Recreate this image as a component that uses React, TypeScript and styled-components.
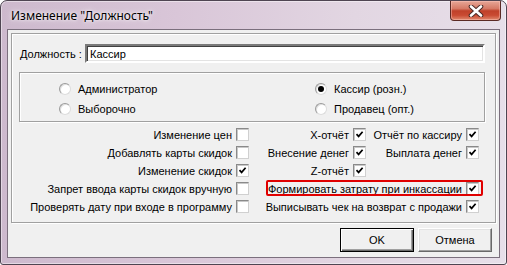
import React from 'react';
import styled, { createGlobalStyle } from 'styled-components';

const GlobalStyle = createGlobalStyle`
  html, body {
    margin: 0;
    padding: 0;
    background: #ffffff;
  }
  body {
    font-family: "Liberation Sans", Arial, sans-serif;
    font-size: 11px;
    color: #000000;
  }
`;

interface CheckItem {
  label: string;
  checked: boolean;
  span?: boolean;
  marked?: boolean;
}

const checkRows: CheckItem[][] = [
  [
    { label: 'Изменение цен', checked: false },
    { label: 'X-отчёт', checked: true },
    { label: 'Отчёт по кассиру', checked: true },
  ],
  [
    { label: 'Добавлять карты скидок', checked: false },
    { label: 'Внесение денег', checked: true },
    { label: 'Выплата денег', checked: true },
  ],
  [
    { label: 'Изменение скидок', checked: true },
    { label: 'Z-отчёт', checked: true },
  ],
  [
    { label: 'Запрет ввода карты скидок вручную', checked: false },
    { label: 'Формировать затрату при инкассации', checked: true, span: true, marked: true },
  ],
  [
    { label: 'Проверять дату при входе в программу', checked: false },
    { label: 'Выписывать чек на возврат с продажи', checked: true, span: true },
  ],
];

const CheckMark = () => (
  <svg width='9' height='9' viewBox='0 0 9 9'>
    <path d='M1.5 4.2 L3.6 6.4 L7.6 1.8' fill='none' stroke='#000' strokeWidth='1.7' />
  </svg>
);

const CloseIcon = () => (
  <svg width='20' height='12' viewBox='0 0 20 12'>
    <path d='M5 1.5 L15 10.5 M15 1.5 L5 10.5' stroke='#4a2a26' strokeWidth='4.6' strokeLinecap='round' />
    <path d='M5 1.5 L15 10.5 M15 1.5 L5 10.5' stroke='#ffffff' strokeWidth='2.6' strokeLinecap='round' />
  </svg>
);

const App = () => {
  return (
    <>
      <GlobalStyle />
      <St.Window>
        <St.TitleBar>
          <St.Title>Изменение "Должность"</St.Title>
          <St.CloseButton>
            <CloseIcon />
          </St.CloseButton>
        </St.TitleBar>
        <St.Client>
          <St.MainPanel>
            <St.NameRow>
              <St.NameLabel>Должность :</St.NameLabel>
              <St.Input>Кассир</St.Input>
            </St.NameRow>

            <St.RadioGroup>
              <St.RadioItem>
                <St.Radio />
                Администратор
              </St.RadioItem>
              <St.RadioItem>
                <St.Radio $checked />
                Кассир (розн.)
              </St.RadioItem>
              <St.RadioItem>
                <St.Radio />
                Выборочно
              </St.RadioItem>
              <St.RadioItem>
                <St.Radio />
                Продавец (опт.)
              </St.RadioItem>
            </St.RadioGroup>

            <St.CheckGrid>
              {checkRows.map((row, r) =>
                row.map((item, c) => (
                  <St.CheckCell key={item.label} $row={r + 1} $col={c + 1} $span={item.span}>
                    <St.CheckLabel $marked={item.marked}>{item.label}</St.CheckLabel>
                    <St.CheckBox>{item.checked && <CheckMark />}</St.CheckBox>
                  </St.CheckCell>
                )),
              )}
            </St.CheckGrid>
          </St.MainPanel>

          <St.ButtonRow>
            <St.Button $default>OK</St.Button>
            <St.Button>Отмена</St.Button>
          </St.ButtonRow>
        </St.Client>
      </St.Window>
    </>
  );
};

const St = {
  Window: styled.div`
    box-sizing: border-box;
    width: 507px;
    height: 265px;
    display: flex;
    flex-direction: column;
    border: 1px solid #4f4552;
    border-radius: 7px 7px 3px 3px;
    overflow: hidden;
    background: linear-gradient(to right, #cdb9cd 0%, #d9c6d8 35%, #e2d6e2 70%, #e7dfe9 100%);
    box-shadow: inset 0 0 0 1px rgba(255, 255, 255, 0.45);
  `,

  TitleBar: styled.div`
    height: 28px;
    flex-shrink: 0;
    display: flex;
    align-items: flex-start;
    justify-content: space-between;
    padding-left: 10px;
  `,

  Title: styled.div`
    font-family: "Noto Sans", "Open Sans", sans-serif;
    font-size: 12px;
    line-height: 29px;
    color: #000;
    text-shadow: 0 0 6px rgba(255, 255, 255, 0.9), 0 0 3px rgba(255, 255, 255, 0.9);
  `,

  CloseButton: styled.div`
    box-sizing: border-box;
    width: 51px;
    height: 20px;
    margin-right: 5px;
    display: flex;
    align-items: center;
    justify-content: center;
    border: 1px solid #5b2a24;
    border-top: none;
    border-radius: 0 0 4px 4px;
    background: linear-gradient(
      to bottom,
      #e7a797 0%,
      #d67a66 40%,
      #c0412a 52%,
      #c94a32 75%,
      #e08a6f 100%
    );
    box-shadow: inset 0 0 0 1px rgba(255, 200, 190, 0.45);
  `,

  Client: styled.div`
    flex: 1;
    margin: 0 6px 6px 6px;
    border: 1px solid #7b6f7d;
    background: #f0f0f0;
    display: flex;
    flex-direction: column;
    padding: 3px 3px 0 3px;
  `,

  MainPanel: styled.div`
    box-sizing: border-box;
    height: 190px;
    border: 1px solid #a0a0a0;
    box-shadow: inset 1px 1px 0 #ffffff, 1px 1px 0 #ffffff;
    padding: 10px 0 0 0;
  `,

  NameRow: styled.div`
    display: flex;
    align-items: center;
    height: 19px;
    padding-left: 8px;
  `,

  NameLabel: styled.div`
    width: 65px;
  `,

  Input: styled.div`
    box-sizing: border-box;
    width: 400px;
    height: 19px;
    padding: 2px 3px;
    background: #ffffff;
    border-style: solid;
    border-width: 2px;
    border-color: #7a7a7a #ffffff #ffffff #7a7a7a;
    box-shadow: inset 1px 1px 0 #404040, inset -1px -1px 0 #e3e3e3;
    line-height: 13px;
  `,

  RadioGroup: styled.div`
    box-sizing: border-box;
    width: 466px;
    height: 50px;
    margin: 9px 0 0 7px;
    border: 1px solid #a0a0a0;
    box-shadow: inset 1px 1px 0 #ffffff, 1px 1px 0 #ffffff;
    display: grid;
    grid-template-columns: 256px 1fr;
    grid-auto-rows: 16px;
    row-gap: 4px;
    padding: 8px 0 0 39px;
  `,

  RadioItem: styled.div`
    display: flex;
    align-items: center;
    gap: 7px;
  `,

  Radio: styled.span<{ $checked?: boolean }>`
    box-sizing: border-box;
    position: relative;
    width: 12px;
    height: 12px;
    border-radius: 50%;
    border: 1px solid;
    border-color: #9a9a9a #dcdcdc #dcdcdc #9a9a9a;
    background: #ffffff;
    box-shadow: inset 1px 1px 0 #e0e0e0;

    &::after {
      content: '';
      display: ${(p) => (p.$checked ? 'block' : 'none')};
      position: absolute;
      left: 2px;
      top: 2px;
      width: 6px;
      height: 6px;
      border-radius: 50%;
      background: #000;
    }
  `,

  CheckGrid: styled.div`
    display: grid;
    grid-template-columns: 237px 117px 113px;
    grid-auto-rows: 13px;
    row-gap: 5px;
    margin-top: 6px;
  `,

  CheckCell: styled.div<{ $row: number; $col: number; $span?: boolean }>`
    grid-row: ${(p) => p.$row};
    grid-column: ${(p) => (p.$span ? `${p.$col} / span 2` : p.$col)};
    display: flex;
    align-items: center;
    justify-content: flex-end;
    gap: 4px;
    white-space: nowrap;
  `,

  CheckLabel: styled.span<{ $marked?: boolean }>`
    position: relative;

    &::before {
      content: '';
      display: ${(p) => (p.$marked ? 'block' : 'none')};
      position: absolute;
      left: -2px;
      right: -21px;
      top: -3px;
      bottom: -1px;
      border: 2px solid #e00000;
      border-radius: 2px;
    }
  `,

  CheckBox: styled.span`
    box-sizing: border-box;
    width: 13px;
    height: 13px;
    flex-shrink: 0;
    display: flex;
    align-items: center;
    justify-content: center;
    background: #ffffff;
    border: 1px solid;
    border-color: #8a8a8a #d0d0d0 #d0d0d0 #8a8a8a;
    box-shadow: inset 1px 1px 0 #c8c8c8;
  `,

  ButtonRow: styled.div`
    display: flex;
    justify-content: flex-end;
    gap: 4px;
    padding: 5px 4px 0 0;
  `,

  Button: styled.div<{ $default?: boolean }>`
    box-sizing: border-box;
    width: 74px;
    height: 24px;
    display: flex;
    align-items: center;
    justify-content: center;
    background: #f0f0f0;
    border: 1px solid ${(p) => (p.$default ? '#000000' : '#ffffff')};
    border-color: ${(p) => (p.$default ? '#000000' : '#ffffff #696969 #696969 #ffffff')};
    box-shadow: ${(p) =>
      p.$default
        ? 'inset 1px 1px 0 #ffffff, inset -1px -1px 0 #696969, inset -2px -2px 0 #a0a0a0'
        : 'inset -1px -1px 0 #a0a0a0, inset 1px 1px 0 #e3e3e3'};
  `,
};

export default App;
